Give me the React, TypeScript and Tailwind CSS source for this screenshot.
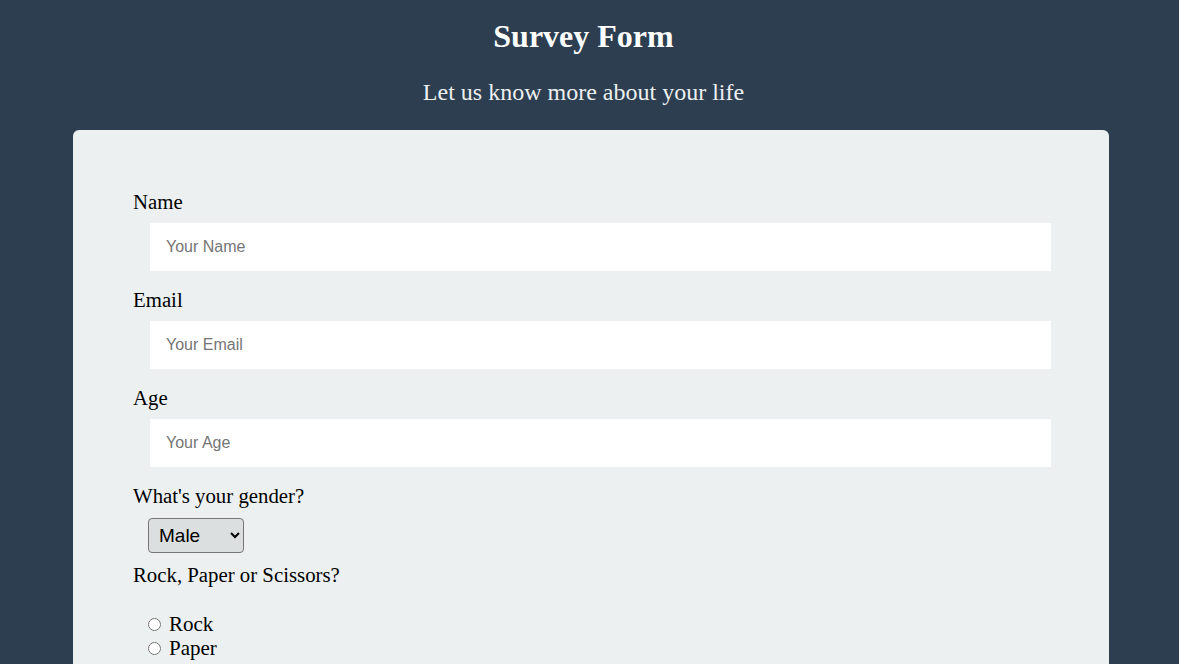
import React from 'react';

const serif = "font-['Liberation_Serif','Times_New_Roman',serif]";
const sans = "font-['Liberation_Sans',Arial,sans-serif]";

const TextField = ({ label, placeholder }: { label: string; placeholder: string }) => (
  <div className="mb-[17px]">
    <label className="block text-[20.8px] leading-[24px] text-black">{label}</label>
    <input
      type="text"
      placeholder={placeholder}
      className={`${sans} mt-[9px] ml-[17px] block h-[48px] w-[calc(100%-17px)] bg-white px-4 text-[16px] text-black outline-none placeholder:text-[#757575]`}
    />
  </div>
);

export default function App() {
  return (
    <div className={`${serif} min-h-[664px] bg-[#2c3e50] pb-10`}>
      {/* Header */}
      <div className="pr-3 pt-[18px] text-center text-white">
        <h1 className="text-[32px] font-bold leading-[37px]">Survey Form</h1>
        <p className="mt-[23px] text-[24px] leading-[28px] text-[#ecf0f1]">Let us know more about your life</p>
      </div>

      <div className="mt-[24px] pl-[73px] pr-[70px]">
        <form className="rounded-md bg-[#ecf0f1] pb-10 pl-[60px] pr-[58px] pt-[60px]">
          <TextField label="Name" placeholder="Your Name" />
          <TextField label="Email" placeholder="Your Email" />
          <TextField label="Age" placeholder="Your Age" />

          <div className="mb-[10px]">
            <label className="block text-[20.8px] leading-[24px] text-black">What's your gender?</label>
            <select
              className={`${sans} mt-[10px] ml-[15px] h-[35px] w-[96px] rounded-[4px] border border-[#767676] bg-[#dcdfe0] pl-[6px] text-[19px] text-black`}
              defaultValue="male"
            >
              <option value="male">Male</option>
              <option value="female">Female</option>
              <option value="other">Other</option>
            </select>
          </div>

          <label className="block text-[20.8px] leading-[24px] text-black">Rock, Paper or Scissors?</label>
          <div className="ml-[15px] mt-[25px] text-[21px] leading-[24px] text-black">
            {['Rock', 'Paper', 'Scissors'].map((v) => (
              <label key={v} className="flex items-center">
                <input type="radio" name="rps" value={v} className="ml-0 mr-[8px] h-[13px] w-[13px]" />
                {v}
              </label>
            ))}
          </div>
        </form>
      </div>
    </div>
  );
}
